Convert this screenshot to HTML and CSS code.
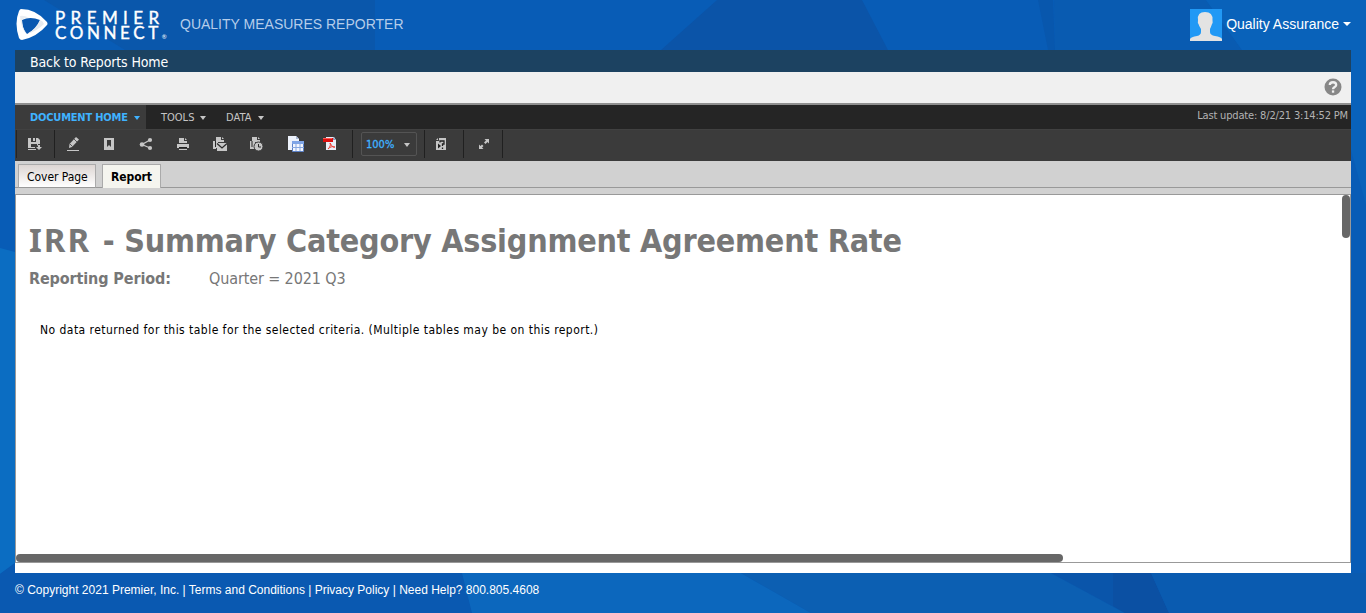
FILE: index.html
```html
<!DOCTYPE html>
<html lang="en">
<head>
<meta charset="utf-8">
<title>Quality Measures Reporter</title>
<link rel="stylesheet" href="styles.css">
</head>
<body>
<svg class="backdrop" viewBox="0 0 1366 613" aria-hidden="true">
  <rect width="1366" height="613" fill="#085cb6"/>
  <path d="M40 0H375V50H125L44 0Z" fill="#0a57ab"/>
  <path d="M717 0H862L888 50H661Z" fill="#0b54a8"/>
  <path d="M1038 0H1053L1055 50H1048Z" fill="#0857ad"/>
  <path d="M1054 0H1206L1242 50H1055Z" fill="#095bb1"/>
  <path d="M1206 0H1366V205L1351 150V50H1242Z" fill="#0962ba"/>
  <path d="M0 248L15 252V563L0 574Z" fill="#0b6dc2"/>
  <path d="M0 574L15 563V573H462L472 613H0Z" fill="#0a59b1"/>
  <path d="M462 573H741L811 613H472Z" fill="#0c67bd"/>
  <path d="M741 573H1051L1125 613H811Z" fill="#0c5fb2"/>
  <path d="M1051 573H1151L1169 613H1125Z" fill="#0a55aa"/>
  <path d="M1113 573H1151L1169 613H1125L1113 606Z" fill="#0b50a3"/>
  <path d="M1151 573H1366V613H1169Z" fill="#0a5bb0"/>
</svg>
<div class="page">
  <header class="header">
    <svg class="mark" viewBox="0 0 32 34">
      <path d="M5 1Q20 1 31 14Q32 16 31 17Q21 29 6 32Q4 32 3 30Q-2 15 3 3Q4 1 5 1Z" fill="#fff"/>
      <path d="M6 12Q14 8 24 12Q21 21 11 26Q6 21 6 12Z" fill="#0a58b0"/>
      <path d="M24 12Q27 13 28 16Q21 23 11 26Q20 21 24 12Z" fill="#e6eaef"/>
      <path d="M4 8Q7 7 13 9.500Q7 10 6 12Q6 19 10 25Q5 21 4 8Z" fill="#e9edf1"/>
    </svg>
    <div class="brand"><span class="brand-top">PREMIER</span><span class="brand-low">CONNECT<i>®</i></span></div>
    <div class="product">QUALITY MEASURES REPORTER</div>
    <div class="account">
      <svg class="avatar" viewBox="0 0 32 32"><rect width="32" height="32" fill="#2199f5"/><path d="M0 32V30Q1 28 7 27Q11 26 11 23V20Q9 17 8.500 15Q7.500 14 8 11Q7 3 15 3Q23 3 22.500 11Q23 14 22 15Q21 18 20 20V23Q20 26 25 27Q31 28 32 30V32Z" fill="#e3e3e3"/></svg>
      <span class="user">Quality Assurance</span><span class="caret"></span>
    </div>
  </header>
  <main class="panel">
    <nav class="back"><span>Back to Reports Home</span></nav>
    <div class="helpbar"><svg class="help" viewBox="0 0 18 18"><circle cx="9" cy="9" r="8.500" fill="#878787"/><path d="M5.800 7C5.800 3.300 12.200 3.300 12.200 7C12.200 9 9 9 9 11.200" fill="none" stroke="#f0f0f0" stroke-width="2.300"/><rect x="7.900" y="12.400" width="2.300" height="2.300" fill="#f0f0f0"/></svg></div>
    <div class="menubar">
      <div class="menu active"><span>DOCUMENT HOME</span><b class="tri"></b></div>
      <div class="menu tools"><span>TOOLS</span><b class="tri"></b></div>
      <div class="menu data"><span>DATA</span><b class="tri"></b></div>
      <span class="updated">Last update: 8/2/21 3:14:52 PM</span>
    </div>
    <div class="toolbar">
      <div class="group g-save">
        <svg class="ico" viewBox="0 0 16 16"><path d="M1 2H4V6H9V2H11L13 4V8H11V9.500H10V8H4V11H8V12H1Z" fill="#c6c6c6"/><path d="M6 2H8V5H6ZM1 13H9V14H1ZM11 9H13V11H15L12 14L9 11H11Z" fill="#c6c6c6"/></svg>
      </div>
      <div class="group g-main">
        <svg class="ico" viewBox="0 0 16 16"><path d="M11 1L14 3.500L7 11L4 12L4.500 8Z" fill="#c6c6c6"/><path d="M9 3L12 6M5 8L7.500 10.500" stroke="#3b3b3b" stroke-width=".8"/><path d="M2 14.500H14" stroke="#c6c6c6"/></svg>
        <svg class="ico" viewBox="0 0 16 16"><path d="M3 2H13V14H3ZM6 4V11L8 9L10 11V4Z" fill="#c6c6c6" fill-rule="evenodd"/></svg>
        <svg class="ico" viewBox="0 0 16 16"><path d="M12 4L4 8.500L12 12" fill="none" stroke="#c6c6c6" stroke-width="1.300"/><g fill="#c6c6c6"><circle cx="12" cy="4" r="2.100"/><circle cx="4" cy="8.500" r="2.300"/><circle cx="12" cy="12" r="2.100"/></g></svg>
        <svg class="ico" viewBox="0 0 16 16"><path d="M4 2H9V5H12V7H4ZM10 2L12 4H10ZM2 8H14V12H2Z" fill="#c6c6c6"/><path d="M4 10.500H12M4 13.500H12" stroke="#c6c6c6"/><path d="M4 11.500H12" stroke="#222"/></svg>
        <svg class="ico" viewBox="0 0 16 16"><path d="M4 1H9V4H12V6H6V12H4V13H1V5H4ZM10 1L12 3H10Z" fill="#c6c6c6"/><path d="M5 7H15V15H5Z" fill="#c6c6c6"/><path d="M5 7.500L10 12L15 7.500" fill="none" stroke="#292929" stroke-width="1.300"/><path d="M3.500 5V11" stroke="#292929"/></svg>
        <svg class="ico" viewBox="0 0 16 16"><path d="M4 1H9V4H12V6H7V13H2V5H4ZM10 1L12 3H10Z" fill="#c6c6c6"/><path d="M4 5V11" stroke="#292929"/><circle cx="10.500" cy="10.500" r="4.500" fill="#c6c6c6" stroke="#3b3b3b"/><path d="M10.500 8V11H13" fill="none" stroke="#292929"/></svg>
        <svg class="ico big" viewBox="0 0 18 18"><path d="M1 1H9L12 4V15H1Z" fill="#edf2fb"/><path d="M9 1V4H12" fill="#a9bad8"/><path d="M5.500 6.500H16.500V16.500H5.500Z" fill="#f2f6fe" stroke="#5c81c6"/><path d="M5 6H17V9H5Z" fill="#7fa5e6"/><path d="M9 9V16M13 9V16M5 12.500H17" stroke="#87a8e1"/></svg>
        <svg class="ico pdf" viewBox="0 0 16 16"><path d="M4 1H12L14 4V14H4Z" fill="#e8eef8"/><path d="M11 1V4H14" fill="#8899b7"/><rect x="1" y="2" width="10" height="4" fill="#dc1010"/><path d="M1 2.500H10" stroke="#ff5750"/><path d="M6 13C8 11 9 9 8 7C10 10 11 12 13 11C10 10 8 11 6 13Z" fill="none" stroke="#ef3b31"/></svg>
      </div>
      <div class="group g-zoom"><div class="zoom"><span>100%</span><b class="tri"></b></div></div>
      <div class="group g-prompt"><svg class="ico" viewBox="0 0 16 16"><path d="M4 2H11V14H1V5H4Z" fill="#c6c6c6"/><path d="M1 4L3 2V4Z" fill="#c6c6c6"/><path d="M3 7.500L6 10L3 12.500Z" fill="#222"/><path d="M5 6.500V5H9V8H7.500V10M7.500 11.500V13" fill="none" stroke="#222" stroke-width="1.300"/></svg></div>
      <div class="group g-full"><svg class="ico" viewBox="0 0 16 16"><path d="M8.500 3H13V7.500L11.500 6L9.500 8L8 6.500L10 4.500ZM3 8.500L4.500 10L6 8.500L7.500 10L6 11.500L7.500 13H3Z" fill="#c6c6c6"/></svg></div>
    </div>
    <div class="tabs">
      <div class="tab"><span>Cover Page</span></div>
      <div class="tab current"><span>Report</span></div>
    </div>
    <section class="report">
      <h1><span class="code">IRR</span> - Summary Category Assignment Agreement Rate</h1>
      <div class="period"><b>Reporting Period:</b><span>Quarter = 2021 Q3</span></div>
      <p>No data returned for this table for the selected criteria. (Multiple tables may be on this report.)</p>
      <i class="vscroll"></i><i class="hscroll"></i>
    </section>
  </main>
  <footer class="footer"><span>© Copyright 2021 Premier, Inc. | Terms and Conditions | Privacy Policy | Need Help? 800.805.4608</span></footer>
</div>
</body>
</html>
```
FILE: styles.css
```css
* { box-sizing: border-box; }
body { margin: 0; height: 613px; overflow: hidden; font-family: "DejaVu Sans Condensed", "DejaVu Sans", sans-serif; font-stretch: condensed; white-space: nowrap; }
svg { display: block; flex: none; }
.backdrop { position: absolute; top: 0; left: 0; width: 1366px; height: 613px; z-index: -1; }
.page { padding: 0 15px; }
.header { height: 50px; display: flex; align-items: flex-start; color: #fff; font-family: "Liberation Sans", Arial, sans-serif; }
.mark { width: 32px; height: 34px; margin: 8px 0 0 1px; }
.brand { margin: 10px 0 0 7px; width: 125px; display: flex; flex-direction: column; font-family: Lato, sans-serif; font-size: 17px; font-weight: 400; -webkit-text-stroke: .4px #fff; line-height: 15px; }
.brand-top { letter-spacing: 5.400px; }
.brand-low { letter-spacing: 3.600px; }
.brand i { font-size: 6px; letter-spacing: 0; font-style: normal; -webkit-text-stroke: 0; }
.product { margin-top: 15px; font-size: 14px; line-height: 18px; color: #b5cdea; }
.account { margin: 9px 0 0 auto; display: flex; align-items: center; }
.avatar { width: 32px; height: 32px; margin-right: 4px; }
.user { font-size: 14px; line-height: 18px; margin-top: -2px; }
.caret { border: 4px solid transparent; border-top-color: #fff; border-bottom: 0; margin: -2px 0 0 4px; }
.panel { height: 523px; background: #fff; }
.back { height: 22px; background: #1c4261; color: #fff; padding: 1px 0 0 15px; font-size: 14px; line-height: 23px; letter-spacing: -.13px; }
.helpbar { height: 33px; background: #f0f0f0; border-bottom: 2px solid #8f8f8f; display: flex; justify-content: flex-end; padding: 6px 9px 0 0; }
.help { width: 18px; height: 18px; }
.menubar { height: 24px; background: #252525; color: #c6c6c6; display: flex; font-size: 11px; line-height: 24px; }
.menu { display: flex; align-items: center; padding: 1px 0 0 15px; letter-spacing: -.2px; }
.active { width: 131px; background: #3b3b3b; color: #3fb2ff; font-weight: bold; }
.tools { width: 65px; letter-spacing: 0; }
.data { letter-spacing: .1px; }
.tri { border: 3.500px solid transparent; border-top: 4px solid #c6c6c6; border-bottom: 0; margin: 0 0 0 6px; }
.active .tri { border-top-color: #3fb2ff; }
.updated { margin: -1px 3px 0 auto; color: #b3b3b3; letter-spacing: -.17px; }
.toolbar { height: 32px; display: flex; background: #3b3b3b; padding: 0 0 3px 1px; border-top: 1px solid #414141; }
.group { height: 28px; border-right: 1px solid #202020; display: flex; align-items: center; }
.ico { width: 16px; height: 16px; }
.g-save { width: 39px; border-left: 1px solid #252525; padding-left: 10px; }
.g-main { width: 298px; padding-left: 10px; gap: 20.800px; }
.g-main .ico:first-child { margin-right: -.700px; }
.g-main .big { width: 18px; height: 18px; margin: 0 -1px 0 2px; }
.g-main .pdf { margin-left: -2.500px; }
.g-zoom { width: 72px; padding-left: 8px; }
.zoom { width: 56px; height: 24px; border: 1px solid #545454; border-radius: 2px; display: flex; align-items: center; padding: 1px 0 0 4px; color: #3fb2ff; font-size: 11px; -webkit-text-stroke: .3px #3fb2ff; }
.zoom .tri { margin: 0 0 0 10px; }
.g-prompt { width: 39px; padding-left: 10px; }
.g-full { width: 39px; padding-left: 12px; }
.tabs { height: 34px; background: #d1d1d1; display: flex; padding: 3px 0 0 3px; background-image: linear-gradient(#999, #999), linear-gradient(#999, #999); background-size: 100% 1px; background-repeat: no-repeat; background-position: 0 26px, 0 33px; font-size: 12px; line-height: 24px; }
.tab { height: 24px; width: 78px; padding-left: 8px; border: 1px solid #aaa; border-bottom-color: #999; background: linear-gradient(#ddd6d3, #fff); margin-right: 6px; letter-spacing: -.05px; }
.current { width: 59px; font-weight: bold; background: #f5f5ef; border-bottom: 0; }
.report { height: 368px; position: relative; border: 1px solid #999; border-top: 0; color: #777; padding-left: 13px; }
h1 { margin: 0; padding-top: 25px; font-size: 32px; line-height: 42px; height: 67px; letter-spacing: -.23px; }
.code { display: inline-block; width: 64px; line-height: 36px; font-family: "Noto Sans", sans-serif; font-size: 33px; letter-spacing: 2px; }
.period { display: flex; font-size: 16px; line-height: 20px; padding-top: 7px; letter-spacing: -.12px; }
.period b { width: 180px; }
p { margin: 33px 0 0 11px; color: #000; font-size: 12px; line-height: 16px; letter-spacing: .46px; }
.vscroll { position: absolute; right: 0; top: 0; width: 8px; height: 43px; border-radius: 4px; background: #676767; }
.hscroll { position: absolute; left: 0; bottom: 0; width: 1047px; height: 8px; border-radius: 4px; background: #676767; }
.footer { color: #fff; font: 12px/16px "Liberation Sans", Arial, sans-serif; padding-top: 9px; }
```
